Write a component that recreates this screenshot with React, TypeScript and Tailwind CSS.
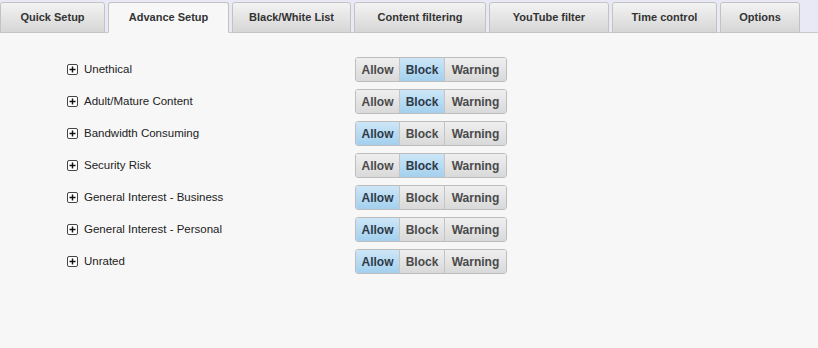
const TABS = [
  { label: "Quick Setup", w: "w-[105px]" },
  { label: "Advance Setup", w: "w-[121px]", active: true },
  { label: "Black/White List", w: "w-[119px]" },
  { label: "Content filtering", w: "w-[132px]" },
  { label: "YouTube filter", w: "w-[120px]" },
  { label: "Time control", w: "w-[105px]" },
  { label: "Options", w: "w-[80px]" },
];

type Mode = "Allow" | "Block" | "Warning";

const ROWS: { label: string; mode: Mode }[] = [
  { label: "Unethical", mode: "Block" },
  { label: "Adult/Mature Content", mode: "Block" },
  { label: "Bandwidth Consuming", mode: "Allow" },
  { label: "Security Risk", mode: "Block" },
  { label: "General Interest - Business", mode: "Allow" },
  { label: "General Interest - Personal", mode: "Allow" },
  { label: "Unrated", mode: "Allow" },
];

const BTNS: { m: Mode; w: string }[] = [
  { m: "Allow", w: "w-[43px]" },
  { m: "Block", w: "w-[45px]" },
  { m: "Warning", w: "w-[62px]" },
];

function PlusBox() {
  return (
    <span className="w-[11px] h-[11px] border border-[#444] rounded-[2px] bg-white flex items-center justify-center">
      <svg width="7" height="7" viewBox="0 0 7 7">
        <path d="M3.5 0.5v6M0.5 3.5h6" stroke="#111" strokeWidth="1.4" />
      </svg>
    </span>
  );
}

function Toggle({ mode }: { mode: Mode }) {
  return (
    <div className="flex h-[25px] rounded-[3px] border border-[#bdbdbd] overflow-hidden">
      {BTNS.map((b, i) => (
        <div
          key={b.m}
          className={[
            "flex items-center justify-center text-[12px] font-bold",
            b.w,
            i > 0 ? "border-l border-[#c4c4c4]" : "",
            b.m === mode
              ? "bg-gradient-to-b from-[#cde6f7] to-[#a3d0ee] text-[#2d3a48] border-[#93bddb]"
              : "bg-gradient-to-b from-[#efefef] to-[#d9d9d9] text-[#4a4a4a]",
          ].join(" ")}
        >
          {b.m}
        </div>
      ))}
    </div>
  );
}

export default function App() {
  return (
    <div className="w-[818px] h-[348px] bg-[#f7f7f7] font-['Liberation_Sans',Arial,sans-serif] overflow-hidden">
      <div className="h-[33px] bg-[#e9e9f6] border-b border-[#c9c9c9] flex items-end gap-[3px]">
        {TABS.map((t) => (
          <div
            key={t.label}
            className={[
              "h-[31px] -mb-px flex items-center justify-center text-[11px] font-bold text-[#333] rounded-t-[3px] border border-[#c3c3c3]",
              t.w,
              t.active
                ? "bg-[#f7f7f7] border-b-[#f7f7f7]"
                : "bg-gradient-to-b from-[#f3f3f3] to-[#d6d6d6]",
            ].join(" ")}
          >
            {t.label}
          </div>
        ))}
      </div>

      <div className="pt-[24px] flex flex-col gap-[7px]">
        {ROWS.map((r) => (
          <div key={r.label} className="flex items-center h-[25px]">
            <div className="w-[355px] pl-[67px] flex items-center gap-[6px] text-[11.5px] text-[#222]">
              <PlusBox />
              <span>{r.label}</span>
            </div>
            <Toggle mode={r.mode} />
          </div>
        ))}
      </div>
    </div>
  );
}
